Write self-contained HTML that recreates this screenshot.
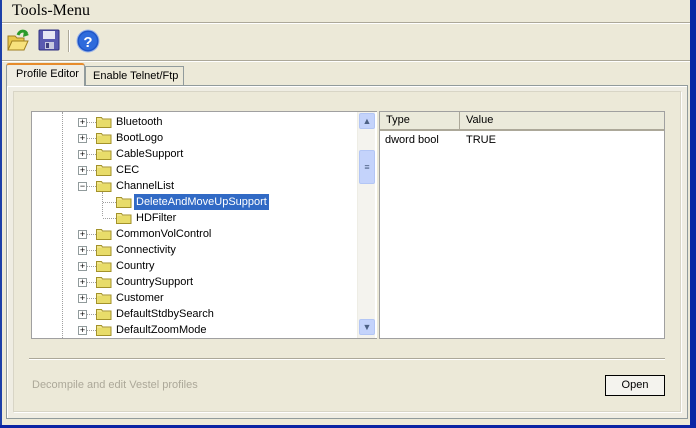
<!DOCTYPE html>
<html><head><meta charset="utf-8"><style>
*{margin:0;padding:0;box-sizing:border-box}
body{width:696px;height:428px;background:#ece9d8;position:relative;overflow:hidden;font-family:"Liberation Sans",Tahoma,sans-serif;font-size:11px;color:#000}
.abs{position:absolute}
.title{left:12px;top:2px;font-family:"Liberation Serif",serif;font-size:16px}
.tree{left:31px;top:111px;width:346px;height:228px;background:#fff;border:1px solid #a0a0a0;border-right:none;overflow:hidden}
.row{position:absolute;height:16px;line-height:16px;white-space:nowrap}
.pb{position:absolute;width:9px;height:9px;border:1px solid #919b9c;background:#fff;font-size:9px;line-height:7px;text-align:center;color:#000}
.fold{position:absolute;width:16px;height:12px}
.sb{left:357px;top:112px;width:18px;height:226px;background:#f4f3ee;border-left:1px solid #eeede5}
.sbtn{position:absolute;left:1px;width:16px;height:16px;background:#c4d3fb;border:1px solid #b3c6f5;border-radius:2px;color:#4d6185;font-size:9px;text-align:center;line-height:14px}
.list{left:379px;top:111px;width:286px;height:228px;background:#fff;border:1px solid #a0a0a0}
.hdr{position:absolute;top:0;height:19px;background:#ebeadb;border-bottom:2px solid #aca899;line-height:17px;padding-left:6px}
</style></head><body>
<div class="abs" style="right:0;top:0;width:6px;height:428px;background:#0a24a4"></div>
<div class="abs" style="left:0;top:0;width:2px;height:428px;background:#1c3fa8"></div>
<div class="abs" style="left:0;bottom:0;width:696px;height:3px;background:#0a24a4"></div>
<div class="abs title">Tools-Menu</div>
<div class="abs" style="left:2px;top:22px;width:688px;height:1px;background:#aca899"></div>
<div class="abs" style="left:2px;top:23px;width:688px;height:1px;background:#fff"></div>
<svg class="abs" style="left:6px;top:28px" width="24" height="24" viewBox="0 0 24 24"><path d="M2 8h7l2 2h7v12H2z" fill="#e8c84c" stroke="#a08020"/><path d="M2 22l4-9h16l-4 9z" fill="#f8e27c" stroke="#a08020"/><path d="M12 7c2-5 7-5 9-1" fill="none" stroke="#2a9a2a" stroke-width="3"/><path d="M18 3l5 4-6 2z" fill="#2a9a2a"/></svg>
<svg class="abs" style="left:37px;top:28px" width="24" height="24" viewBox="0 0 24 24"><rect x="2" y="2" width="20" height="20" rx="1" fill="#5a5ab0" stroke="#303080"/><rect x="6" y="3" width="12" height="8" fill="#e8e8f4"/><rect x="8" y="14" width="9" height="7" fill="#c8c8e0"/><rect x="9" y="15" width="3" height="5" fill="#404080"/></svg>
<div class="abs" style="left:68px;top:30px;width:1px;height:22px;background:#aca899"></div>
<div class="abs" style="left:69px;top:30px;width:1px;height:22px;background:#fff"></div>
<svg class="abs" style="left:76px;top:29px" width="24" height="24" viewBox="0 0 24 24"><circle cx="12" cy="12" r="11" fill="#1f56c8" stroke="#9ab4e8"/><circle cx="12" cy="12" r="9" fill="#2e6bdc"/><text x="12" y="18" text-anchor="middle" font-family="Liberation Sans" font-weight="bold" font-size="15" fill="#fff">?</text></svg>
<div class="abs" style="left:2px;top:60px;width:688px;height:1px;background:#aca899"></div>
<div class="abs" style="left:2px;top:61px;width:688px;height:1px;background:#fff"></div>
<div class="abs" style="left:6px;top:85px;width:682px;height:334px;border:1px solid #919b9c;background:#efede3;box-shadow:inset 1px 1px #fff"></div>
<div class="abs" style="left:6px;top:63px;width:79px;height:23px;border:1px solid #919b9c;border-bottom:none;background:#efede3;border-top:2px solid #e68b2c;border-radius:3px 3px 0 0;padding:3px 0 0 9px">Profile Editor</div>
<div class="abs" style="left:85px;top:66px;width:99px;height:19px;border:1px solid #919b9c;border-bottom:none;background:#ece9d8;padding:3px 0 0 7px">Enable Telnet/Ftp</div>
<div class="abs" style="left:13px;top:91px;width:668px;height:321px;border:1px solid #d8d5c6;background:#ece9d8;box-shadow:1px 1px #fff"></div>
<div class="abs tree">
<div style="position:absolute;left:30px;top:0;height:228px;border-left:1px dotted #a0a0a0"></div>
<div style="position:absolute;left:70px;top:80px;height:24px;border-left:1px dotted #a0a0a0"></div>
<div id="rows"></div>
</div>
<div class="abs sb">
<div class="sbtn" style="top:1px">&#9650;</div>
<div class="sbtn" style="top:38px;height:34px;line-height:32px">&#8801;</div>
<div class="sbtn" style="top:207px">&#9660;</div>
</div>
<div class="abs list">
<div class="hdr" style="left:0;width:80px;border-right:1px solid #aca899">Type</div>
<div class="hdr" style="left:80px;width:204px">Value</div>
<div class="abs" style="left:5px;top:22px">dword bool</div>
<div class="abs" style="left:86px;top:22px">TRUE</div>
</div>
<div class="abs" style="left:29px;top:358px;width:636px;height:1px;background:#aca899"></div>
<div class="abs" style="left:29px;top:359px;width:636px;height:1px;background:#fff"></div>
<div class="abs" style="left:32px;top:379px;color:#aca899">Decompile and edit Vestel profiles</div>
<div class="abs" style="left:605px;top:375px;width:60px;height:21px;border:1px solid #000;background:#f4f3ee;text-align:center;line-height:19px">Open</div>
<script>
var items=[["Bluetooth",0,"+"],["BootLogo",0,"+"],["CableSupport",0,"+"],["CEC",0,"+"],["ChannelList",0,"-"],["DeleteAndMoveUpSupport",1,"sel"],["HDFilter",1,""],["CommonVolControl",0,"+"],["Connectivity",0,"+"],["Country",0,"+"],["CountrySupport",0,"+"],["Customer",0,"+"],["DefaultStdbySearch",0,"+"],["DefaultZoomMode",0,"+"]];
var h="";
items.forEach(function(it,i){var y=2+i*16;var x=it[1]?84:64;
if(it[1]){h+='<div style="position:absolute;left:71px;top:'+(y+8)+'px;width:13px;border-top:1px dotted #a0a0a0"></div>';}
else{h+='<div style="position:absolute;left:55px;top:'+(y+8)+'px;width:9px;border-top:1px dotted #a0a0a0"></div>';
h+='<div class="pb" style="left:46px;top:'+(y+4)+'px">'+(it[2]=="-"?"−":"+")+'</div>';}
h+='<svg class="fold" style="left:'+x+'px;top:'+(y+2)+'px" viewBox="0 0 16 12"><path d="M0.5 1.5h5l1 1.5h8.5v8.5H0.5z" fill="#f1e58a" stroke="#a3922a"/><rect x="1.5" y="4" width="13" height="7" fill="#e8dc6a"/></svg>';
var s=it[2]=="sel";
h+='<div class="row" style="left:'+(x+20)+'px;top:'+y+'px;'+(s?'background:#316ac5;color:#fff;padding:0 2px;margin-left:-2px;':'')+'">'+it[0]+'</div>';});
document.getElementById("rows").innerHTML=h;
</script>
</body></html>
